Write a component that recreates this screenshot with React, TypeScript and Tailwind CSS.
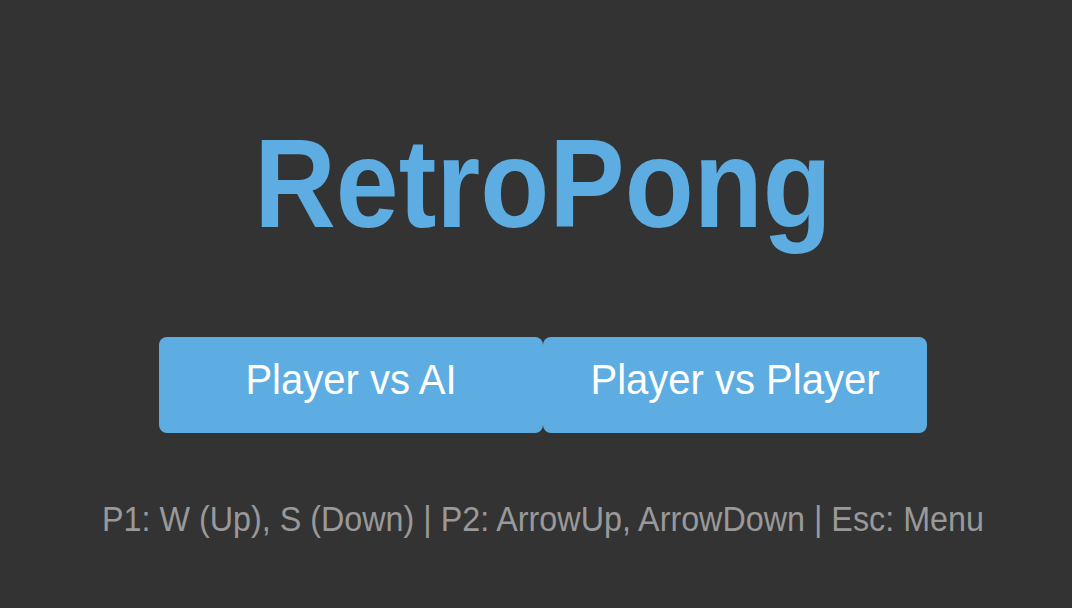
export default function App() {
  return (
    <main
      className="flex h-screen w-full flex-col items-center bg-[#333333] pl-[14px]"
      style={{ fontFamily: '"Liberation Sans", Arial, sans-serif' }}
    >
      <h1 className="mt-[120px] scale-y-[1.11] text-[113px] font-bold leading-[1.15] text-[#5dade2]">
        RetroPong
      </h1>
      <div className="mt-[87px] flex">
        <button className="h-[96px] w-[384px] rounded-lg bg-[#5dade2] pb-[12px] text-[40px] text-white">
          <span className="inline-block scale-y-[1.05]">Player vs AI</span>
        </button>
        <button className="h-[96px] w-[384px] rounded-lg bg-[#5dade2] pb-[12px] text-[40px] text-white">
          <span className="inline-block scale-y-[1.05]">Player vs Player</span>
        </button>
      </div>
      <p className="mt-[62px] scale-y-[1.07] text-[32.3px] text-[#999999]">
        P1: W (Up), S (Down) | P2: ArrowUp, ArrowDown | Esc: Menu
      </p>
    </main>
  );
}
